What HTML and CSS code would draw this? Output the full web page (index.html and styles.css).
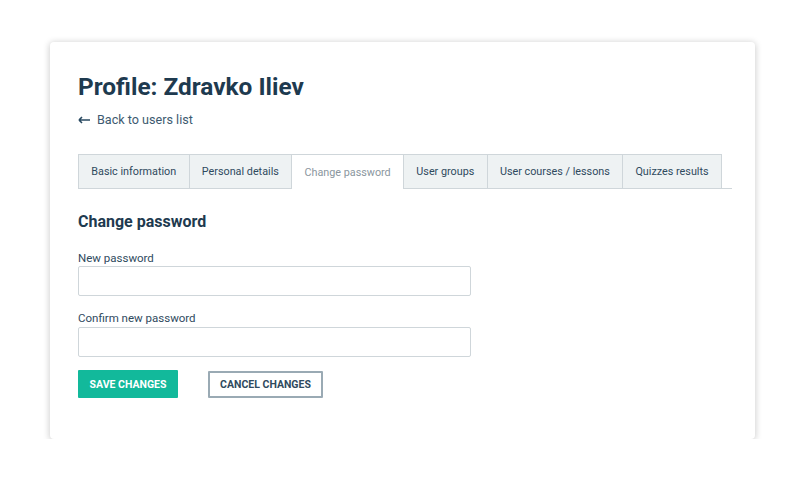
FILE: index.html
```html
<!DOCTYPE html>
<html>
<head>
<meta charset="utf-8">
<link rel="stylesheet" href="styles.css">
</head>
<body>
<div class="card">
  <h1 class="title">Profile: Zdravko Iliev</h1>
  <a class="back" href="#"><svg class="arrow" width="12" height="8" viewBox="0 0 12 8"><path d="M1 4H12M1 4L4 1M1 4L4 7" stroke="#2a4a62" stroke-width="1.6" fill="none"/></svg>Back to users list</a>
  <div class="tabs">
    <div class="tab">Basic information</div>
    <div class="tab">Personal details</div>
    <div class="tab active">Change password</div>
    <div class="tab">User groups</div>
    <div class="tab">User courses / lessons</div>
    <div class="tab">Quizzes results</div>
  </div>
  <h2 class="section">Change password</h2>
  <label class="label first">New password</label>
  <input class="input first-input" type="password">
  <label class="label second">Confirm new password</label>
  <input class="input second-input" type="password">
  <div class="actions">
    <button class="btn save">SAVE CHANGES</button>
    <button class="btn cancel">CANCEL CHANGES</button>
  </div>
</div>
</body>
</html>
```
FILE: styles.css
```css
* { box-sizing: border-box; }
html, body { margin: 0; padding: 0; background: #fff; }
body {
  font-family: Roboto, "Liberation Sans", Arial, sans-serif;
  padding: 42px 0 0 50px;
}
.card {
  width: 705px;
  height: 397px;
  background: #fff;
  border-radius: 4px;
  box-shadow: 0 1px 6px 1px rgba(0,0,0,0.18);
  padding: 30px 23px 0 28px;
  display: flex;
  flex-direction: column;
  align-items: flex-start;
}
.title {
  margin: 0;
  font-size: 24.4px;
  font-weight: 700;
  line-height: 30px;
  color: #1e3a4f;
}
.back {
  margin-top: 9px;
  display: flex;
  align-items: center;
  font-size: 12.6px;
  line-height: 17px;
  color: #3d5a70;
  text-decoration: none;
}
.arrow { margin-right: 7px; }
.tabs {
  margin-top: 26px;
  display: flex;
  width: 100%;
  border-bottom: 1px solid #cfd6da;
}
.tab {
  flex-shrink: 0;
  white-space: nowrap;
  height: 34px;
  padding: 0 12.3px;
  display: flex;
  align-items: center;
  font-size: 10.8px;
  color: #2f4a5e;
  background: #eef2f3;
  border: 1px solid #cfd6da;
  border-bottom: none;
  margin-left: -1px;
  margin-bottom: -1px;
}
.tab:first-child { margin-left: 0; }
.tab.active {
  background: #fff;
  color: #8a969e;
  height: 35px;
}
.section {
  margin: 23px 0 0 0;
  font-size: 16px;
  font-weight: 700;
  line-height: 20px;
  color: #1e3a4f;
}
.label {
  font-size: 11.5px;
  line-height: 14px;
  color: #2f4a5e;
}
.label.first { margin-top: 19px; }
.label.second { margin-top: 15px; }
.input {
  width: 393px;
  height: 30px;
  border: 1px solid #cfd6da;
  border-radius: 2px;
  background: #fff;
}
.first-input { margin-top: 1px; }
.second-input { margin-top: 2px; }
.actions {
  margin-top: 13px;
  display: flex;
  align-items: center;
  gap: 30px;
}
.btn {
  font-family: Roboto, "Liberation Sans", Arial, sans-serif;
  font-size: 10.5px;
  font-weight: 700;
  border-radius: 1px;
  cursor: pointer;
}
.save {
  width: 100px;
  height: 28px;
  background: #12b99b;
  color: #fff;
  border: none;
}
.cancel {
  width: 115px;
  height: 27px;
  background: #fff;
  color: #2f4a5e;
  border: 2px solid #9aaab4;
}
```
